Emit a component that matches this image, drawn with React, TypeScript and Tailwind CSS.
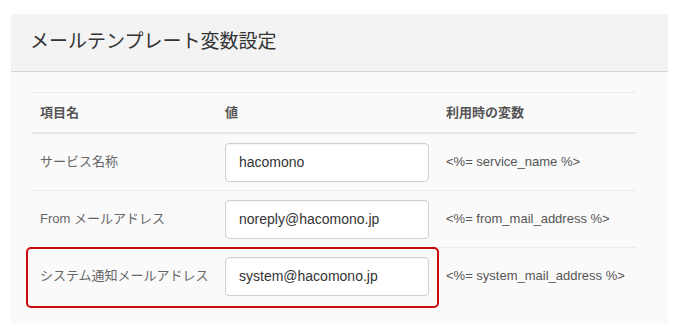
import React from "react";

const font = { fontFamily: '"Liberation Sans", "Noto Sans CJK JP", sans-serif' };

type Row = { label: string; value: string; variable: string; highlight?: boolean };

const rows: Row[] = [
  { label: "サービス名称", value: "hacomono", variable: "<%= service_name %>" },
  { label: "From メールアドレス", value: "noreply@hacomono.jp", variable: "<%= from_mail_address %>" },
  {
    label: "システム通知メールアドレス",
    value: "system@hacomono.jp",
    variable: "<%= system_mail_address %>",
    highlight: true,
  },
];

const App: React.FC = () => {
  return (
    <div className="bg-white h-[324px] w-[680px] overflow-hidden pt-[14px] pl-[11px] pr-[12px]" style={font}>
      <div className="bg-[#fafafa] rounded-t-[4px] h-full">
        <div className="h-[58px] bg-[#f3f3f3] border-b border-[#d6d6d6] rounded-t-[4px] flex items-center pl-[19px]">
          <h1 className="text-[19px] text-[#333] font-normal">メールテンプレート変数設定</h1>
        </div>
        <div className="pt-[20px] pl-[21px] pr-[32px]">
          <div className="border-t border-[#ebebeb]">
            <div className="grid grid-cols-[185px_220px_1fr] h-[41px] items-center border-b-2 border-[#e4e7eb] text-[13px] font-bold text-[#555]">
              <div className="px-2">項目名</div>
              <div className="px-2">値</div>
              <div className="pl-[9px]">利用時の変数</div>
            </div>
            {rows.map((r, i) => (
              <div
                key={r.label}
                className={`relative grid grid-cols-[185px_220px_1fr] h-[56px] items-center ${
                  i < rows.length - 1 ? "border-b border-[#ebebeb] box-content" : ""
                }`}
              >
                <div className="px-2 text-[13px] text-[#666]">{r.label}</div>
                <div className="px-2">
                  <div className="h-[39px] w-[204px] rounded-[4px] border border-[#cfcfcf] bg-white flex items-center pl-[13px] text-[14px] text-[#333] shadow-[inset_0_1px_1px_rgba(0,0,0,0.04)]">
                    {r.value}
                  </div>
                </div>
                <div className="pl-[9px] text-[13px] text-[#555]">{r.variable}</div>
                {r.highlight && (
                  <div className="absolute -top-[1px] -left-[6px] w-[413px] h-[61px] rounded-[5px] border-2 border-[#cc0a0a] pointer-events-none" />
                )}
              </div>
            ))}
          </div>
        </div>
      </div>
    </div>
  );
};

export default App;
